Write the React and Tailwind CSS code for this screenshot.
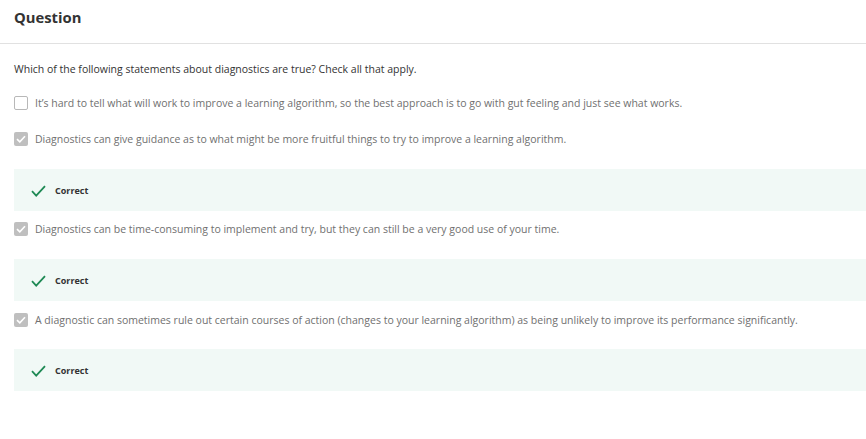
import React from "react";

const font = { fontFamily: '"Open Sans", "Noto Sans", sans-serif' };

function Box({ checked }) {
  if (!checked) {
    return (
      <span className="w-[14px] h-[14px] shrink-0 rounded-[2px] border border-[#b8b8b8] bg-white" />
    );
  }
  return (
    <span className="w-[14px] h-[14px] shrink-0 rounded-[2px] bg-[#bfbfbf] flex items-center justify-center">
      <svg width="10" height="8" viewBox="0 0 10 8" fill="none">
        <path d="M1 4.2 L3.8 6.8 L9 1.2" stroke="#fff" strokeWidth="1.6" />
      </svg>
    </span>
  );
}

function Option({ checked, children, className = "" }) {
  return (
    <div className={"flex items-center gap-[7px] h-[20px] " + className}>
      <Box checked={checked} />
      <span className="text-[10.5px] leading-[20px] text-[#707070]">{children}</span>
    </div>
  );
}

function Correct({ className = "" }) {
  return (
    <div className={"h-[42px] bg-[#f1f9f6] flex items-center pl-[17px] mr-[-14px] " + className}>
      <svg width="15" height="12" viewBox="0 0 15 12" fill="none" className="mt-[1px]">
        <path d="M1 6.2 L5.2 10.6 L14 1.2" stroke="#1f8a55" strokeWidth="1.8" />
      </svg>
      <span className="ml-[9px] text-[9px] leading-[14px] font-bold text-[#333] mt-[1px]">Correct</span>
    </div>
  );
}

export default function App() {
  return (
    <div className="w-[866px] h-[439px] bg-white overflow-hidden" style={font}>
      <div className="h-[44px] border-b border-[#e1e1e1] px-[14px] pt-[8px]">
        <h1 className="text-[14.8px] leading-[18px] font-bold text-[#333]">Question</h1>
      </div>
      <div className="px-[14px]">
        <p className="mt-[17px] text-[10.5px] leading-[16px] text-[#333]">
          Which of the following statements about diagnostics are true? Check all that apply.
        </p>
        <Option checked={false} className="mt-[16px]">
          It’s hard to tell what will work to improve a learning algorithm, so the best approach is to go with gut feeling and just see what works.
        </Option>
        <Option checked className="mt-[16px]">
          Diagnostics can give guidance as to what might be more fruitful things to try to improve a learning algorithm.
        </Option>
        <Correct className="mt-[20px]" />
        <Option checked className="mt-[8px]">
          Diagnostics can be time-consuming to implement and try, but they can still be a very good use of your time.
        </Option>
        <Correct className="mt-[20px]" />
        <Option checked className="mt-[9px]">
          A diagnostic can sometimes rule out certain courses of action (changes to your learning algorithm) as being unlikely to improve its performance significantly.
        </Option>
        <Correct className="mt-[19px]" />
      </div>
    </div>
  );
}
